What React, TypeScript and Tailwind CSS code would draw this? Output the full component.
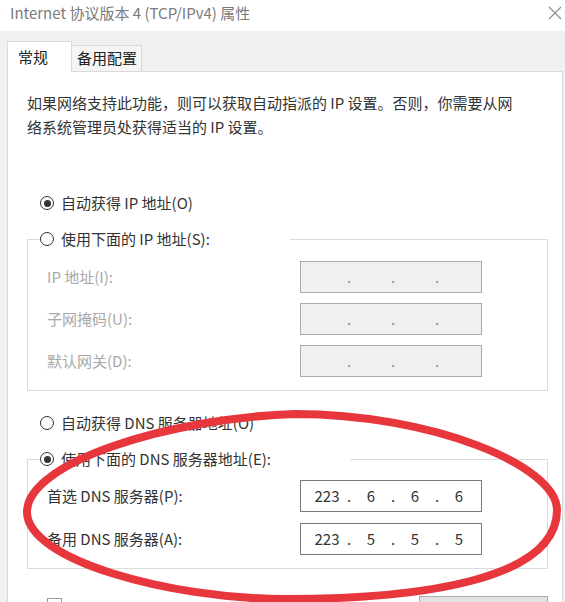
import type { ReactNode } from "react";

/* Windows "IPv4 属性" dialog, General tab, with a hand-drawn red ring over the DNS block. */

function Radio({ checked, children }: { checked?: boolean; children: ReactNode }) {
  return (
    <div className="flex h-[24px] items-center gap-[7px] bg-white">
      <span className="flex h-[14px] w-[14px] items-center justify-center rounded-full border border-[#333]">
        {checked && <span className="h-[7px] w-[7px] rounded-full bg-[#333]" />}
      </span>
      <span>{children}</span>
    </div>
  );
}

function IpBox({ parts, disabled }: { parts?: string[]; disabled?: boolean }) {
  const segs = parts ?? ["", "", "", ""];
  return (
    <div
      className={
        disabled
          ? "flex h-[32px] w-[182px] items-center border border-[#ababab] bg-[#f0f0f0] pl-[9px] text-[#8a8a8a]"
          : "flex h-[32px] w-[182px] items-center border border-[#7a7a7a] bg-white pl-[9px] text-[#333]"
      }
    >
      {segs.map((s, i) => (
        <div key={i} className="flex items-center">
          <span className="w-[34px] text-center">{s}</span>
          {i < 3 && <span className="w-[10px] text-center">.</span>}
        </div>
      ))}
    </div>
  );
}

function Row({ label, disabled, children }: { label: string; disabled?: boolean; children: ReactNode }) {
  return (
    <div className="flex h-[32px] items-center">
      <span className={disabled ? "w-[253px] text-[#a8a8a8]" : "w-[253px] text-[#333]"}>{label}</span>
      {children}
    </div>
  );
}

export default function App() {
  return (
    <div className="relative h-[602px] w-[565px] overflow-hidden bg-[#f0f0f0] font-['Noto_Sans_CJK_SC',sans-serif] text-[15px] text-[#222]">
      {/* title bar */}
      <div className="flex h-[31px] items-center justify-between bg-white pb-[5px] pl-[10px] pr-[3px]">
        <span className="text-[#7b7b7b]">Internet 协议版本 4 (TCP/IPv4) 属性</span>
        <svg width="14" height="14" viewBox="0 0 14 14" stroke="#8a8a8a" strokeWidth="1.1">
          <line x1="1" y1="1" x2="13" y2="13" />
          <line x1="13" y1="1" x2="1" y2="13" />
        </svg>
      </div>

      {/* tabs */}
      <div className="flex items-end pl-[7px] pt-[10px]">
        <div className="relative z-10 -mb-px flex h-[31px] w-[65px] items-center border border-b-0 border-[#d9d9d9] bg-white pl-[10px]">
          常规
        </div>
        <div className="flex h-[26px] w-[70px] items-center border border-b-0 border-l-0 border-[#d9d9d9] bg-[#f5f5f5] pl-[5px]">
          备用配置
        </div>
      </div>

      {/* panel */}
      <div className="ml-[7px] h-[560px] w-[556px] border border-[#d9d9d9] bg-white pl-[19px] pr-[14px] pt-[19px]">
        <p className="whitespace-nowrap leading-[24px] text-[#333]">
          如果网络支持此功能，则可以获取自动指派的 IP 设置。否则，你需要从网
          <br />
          络系统管理员处获得适当的 IP 设置。
        </p>

        <div className="mt-[52px] pl-[13px] text-[#333]">
          <Radio checked>自动获得 IP 地址(O)</Radio>
        </div>

        <fieldset className="mt-[12px] border border-[#dcdcdc] p-0 text-[#333]">
          <legend className="ml-[12px] w-[250px] p-0">
            <Radio>使用下面的 IP 地址(S):</Radio>
          </legend>
          <div className="flex flex-col gap-[10px] pb-[13px] pl-[19px] pt-[10px]">
            <Row label="IP 地址(I):" disabled>
              <IpBox disabled />
            </Row>
            <Row label="子网掩码(U):" disabled>
              <IpBox disabled />
            </Row>
            <Row label="默认网关(D):" disabled>
              <IpBox disabled />
            </Row>
          </div>
        </fieldset>

        <div className="mt-[20px] pl-[13px] text-[#333]">
          <Radio>自动获得 DNS 服务器地址(O)</Radio>
        </div>

        <fieldset className="mt-[12px] border border-[#dcdcdc] p-0 text-[#333]">
          <legend className="ml-[12px] w-[310px] p-0">
            <Radio checked>使用下面的 DNS 服务器地址(E):</Radio>
          </legend>
          <div className="flex flex-col gap-[11px] pb-[13px] pl-[19px] pt-[9px]">
            <Row label="首选 DNS 服务器(P):">
              <IpBox parts={["223", "6", "6", "6"]} />
            </Row>
            <Row label="备用 DNS 服务器(A):">
              <IpBox parts={["223", "5", "5", "5"]} />
            </Row>
          </div>
        </fieldset>

        {/* checkbox + "advanced" button, only their top edges fall inside the shot */}
        <div className="mt-[27px] flex items-start justify-between pl-[20px]">
          <span className="mt-[2px] h-[15px] w-[15px] border border-[#999] bg-white" />
          <div className="h-[28px] w-[129px] border border-[#adadad] bg-[#e1e1e1]" />
        </div>
      </div>

      {/* red marker ring */}
      <svg
        className="pointer-events-none absolute left-0 top-0"
        width="565"
        height="602"
        viewBox="0 0 565 602"
        fill="none"
      >
        <path
          d="M557 510 C557 465 430 414 295 414 C170 418 27 462 27 512 C27 560 170 599 285 599 C420 599 557 580 557 510 Z"
          stroke="#e8363d"
          strokeWidth="8"
        />
      </svg>
    </div>
  );
}
